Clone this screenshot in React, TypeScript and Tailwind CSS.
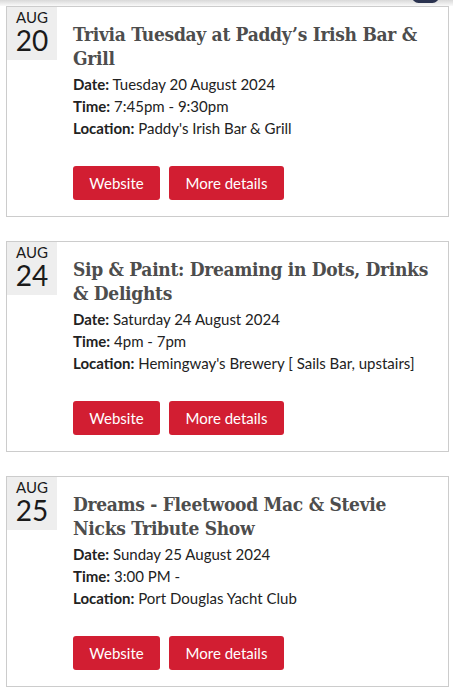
import React from "react";

type Ev = {
  mon: string;
  day: string;
  title: string;
  date: string;
  time: string;
  location: string;
};

const events: Ev[] = [
  {
    mon: "AUG",
    day: "20",
    title: "Trivia Tuesday at Paddy\u2019s Irish Bar & Grill",
    date: "Tuesday 20 August 2024",
    time: "7:45pm - 9:30pm",
    location: "Paddy's Irish Bar & Grill",
  },
  {
    mon: "AUG",
    day: "24",
    title: "Sip & Paint: Dreaming in Dots, Drinks & Delights",
    date: "Saturday 24 August 2024",
    time: "4pm - 7pm",
    location: "Hemingway's Brewery [ Sails Bar, upstairs]",
  },
  {
    mon: "AUG",
    day: "25",
    title: "Dreams - Fleetwood Mac & Stevie Nicks Tribute Show",
    date: "Sunday 25 August 2024",
    time: "3:00 PM -",
    location: "Port Douglas Yacht Club",
  },
];

function Card({ ev }: { ev: Ev }) {
  return (
    <div className="ml-[6px] w-[443px] border border-[#cccccc] bg-white flex">
      <div className="w-[50px] h-[53px] shrink-0 bg-[#eeeeee] flex flex-col items-center pt-[3px] text-[#1a1a1a] font-['Lato',sans-serif]">
        <div className="text-[15px] leading-[15px]">{ev.mon}</div>
        <div className="mt-[1px] text-[28px] leading-[28px]">{ev.day}</div>
      </div>
      <div className="flex-1 pl-4 pr-[12px] pt-[15px] pb-[16px]">
        <h2 className="font-['DejaVu_Serif_Condensed','DejaVu_Serif',serif] font-bold text-[19px] leading-[24px] text-[#4d4d4d] tracking-[-0.3px]">
          {ev.title}
        </h2>
        <div className="mt-[3px] font-['Lato',sans-serif] text-[15px] leading-[22px] text-[#222222]">
          <div>
            <span className="font-bold">Date:</span> {ev.date}
          </div>
          <div>
            <span className="font-bold">Time:</span> {ev.time}
          </div>
          <div>
            <span className="font-bold">Location:</span> {ev.location}
          </div>
        </div>
        <div className="mt-[27px] flex gap-[9px] font-['Lato',sans-serif]">
          <button className="h-[34px] w-[87px] rounded-[3px] bg-[#d21e32] text-white text-[15px]">
            Website
          </button>
          <button className="h-[34px] w-[115px] rounded-[3px] bg-[#d21e32] text-white text-[15px]">
            More details
          </button>
        </div>
      </div>
    </div>
  );
}

export default function App() {
  return (
    <div className="relative w-[453px] min-h-[687px] bg-white overflow-hidden">
      <div className="h-[6px] bg-gradient-to-b from-[#d9d9d9] to-[#fafafa]" />
      <div className="absolute left-[412px] -top-[10px] w-[27px] h-[13px] rounded-full bg-[#2b3350]" />
      <div className="flex flex-col gap-6">
        {events.map((ev) => (
          <Card key={ev.day} ev={ev} />
        ))}
      </div>
    </div>
  );
}
